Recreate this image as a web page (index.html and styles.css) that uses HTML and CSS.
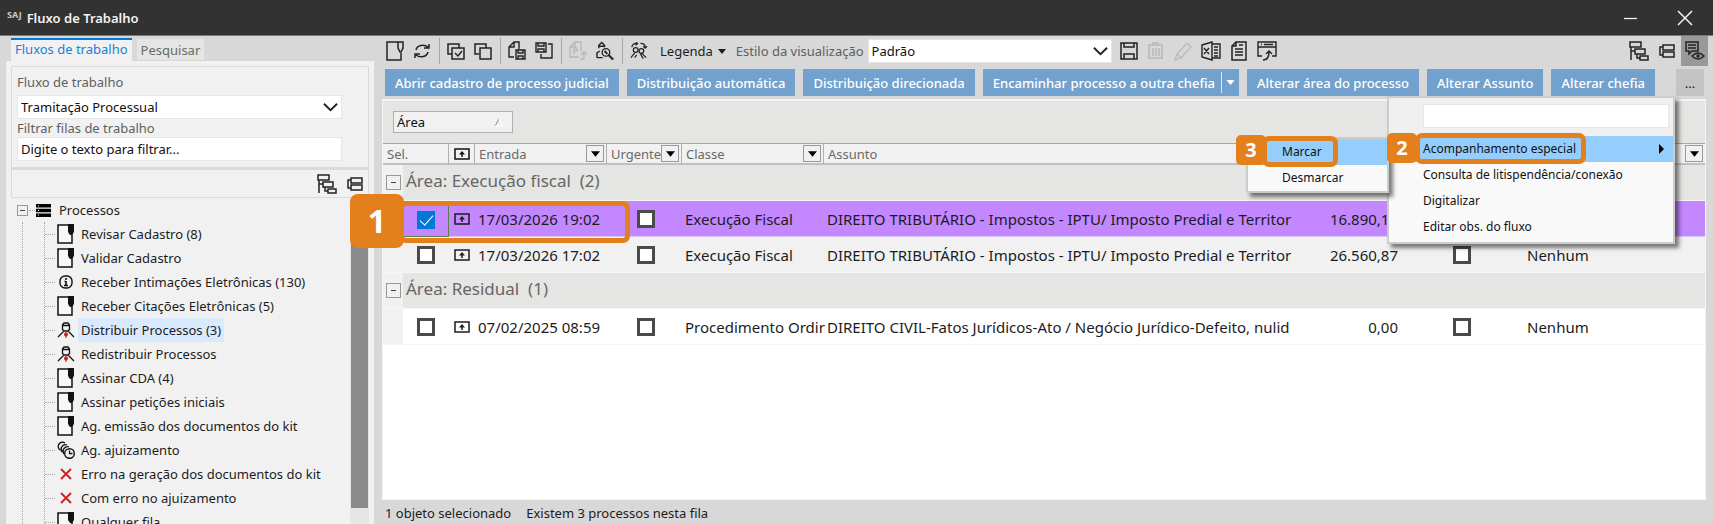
FILE: index.html
```html
<!DOCTYPE html>
<html lang="pt-BR">
<head>
<meta charset="utf-8">
<title>Fluxo de Trabalho</title>
<link rel="stylesheet" href="styles.css">
</head>
<body>
<svg class="defs" aria-hidden="true">
  <symbol id="i-note" viewBox="0 0 18 20"><path d="M1 1h14v18H1z" fill="#f8f8f8" stroke="currentColor" stroke-width="1.5"/><path d="M11 0h6v8l-2 3h-2l-2-3z" fill="currentColor"/></symbol>
  <symbol id="i-new" viewBox="0 0 18 20"><path d="M12 1H1v18h14v-7M12 1h5v6l-2 4h-1l-2-4z" fill="none" stroke="currentColor" stroke-width="1.5"/></symbol>
  <symbol id="i-refresh" viewBox="0 0 18 20"><path d="M3 9c1-5 8-6 12-3M16 3v4h-5M15 11c-1 5-8 6-12 3M2 17v-4h5" fill="none" stroke="currentColor" stroke-width="1.5"/></symbol>
  <symbol id="i-selall" viewBox="0 0 18 20"><path d="M5 13H1V3h11v4M5 7h12v11H5zM8 12l3 3 4-5" fill="none" stroke="currentColor" stroke-width="1.5"/></symbol>
  <symbol id="i-copy" viewBox="0 0 18 20"><path d="M5 13H1V3h11v4M6 7h11v11H6z" fill="none" stroke="currentColor" stroke-width="1.5"/></symbol>
  <symbol id="i-docsave" viewBox="0 0 18 20"><path d="M6 16H1V6l5-5h5v7M6 1v5H1M8 9h9v9H8zM10 9v3h5V9M10 18v-3h5v3" fill="none" stroke="currentColor" stroke-width="1.4"/></symbol>
  <symbol id="i-savedoc" viewBox="0 0 18 20"><path d="M1 2h10v9H1zM3 2v3h6V2M3 11V8h6v3M13 3h4v14H6v-4" fill="none" stroke="currentColor" stroke-width="1.4"/></symbol>
  <symbol id="i-pdoc" viewBox="0 0 18 20"><path d="M10 16H1V6l5-5h6v9M6 1v5H1M5 13V7h3v3H5M11 18h4v-6M12 14l3-3 3 3" fill="none" stroke="currentColor" stroke-width="1.3"/></symbol>
  <symbol id="i-search" viewBox="0 0 19 20"><path d="M1 17h6M1 17v-5l3-2M3 7V4l3-3 3 3v2M3 5h6M13 14l5 5" fill="none" stroke="currentColor" stroke-width="1.5"/><circle cx="10.500" cy="11.500" r="4" fill="none" stroke="currentColor" stroke-width="1.4"/><path d="M9 10l3 3M13 14l5 5" stroke="currentColor" stroke-width="2"/></symbol>
  <symbol id="i-swap" viewBox="0 0 19 20"><path d="M2 6c0-3 2-4 6-4M6 1l2 1-2 2M11 2c3 0 5 1 5 4M14 5l2 2 2-2M1 17l4-5M12 12l5 5M5 17l2-3M11 13l3 5" fill="none" stroke="currentColor" stroke-width="1.3"/><circle cx="6" cy="9" r="2.500" fill="none" stroke="currentColor" stroke-width="1.3"/><circle cx="12" cy="10" r="2.500" fill="none" stroke="currentColor" stroke-width="1.3"/></symbol>
  <symbol id="i-save" viewBox="0 0 18 20"><path d="M1 2h16v16H1zM4 2v4h10V2M4 18v-5h10v5" fill="none" stroke="currentColor" stroke-width="1.5"/></symbol>
  <symbol id="i-trash" viewBox="0 0 18 20"><path d="M1 4h15M6 4V2h5v2M2 4v13h13V4M6 7v8M9 7v8M12 7v8" fill="none" stroke="currentColor" stroke-width="1.5"/></symbol>
  <symbol id="i-pencil" viewBox="0 0 18 20"><path d="M1 19l2-6L13 2l4 4L7 17zM3 13l4 4" fill="none" stroke="currentColor" stroke-width="1.2"/></symbol>
  <symbol id="i-excel" viewBox="0 0 20 20"><path d="M1 4l10-3v18L1 16zM11 3h8v14h-8M3 7l5 6M8 7l-5 6M13 6h4M13 9h4M13 12h4M13 15h4" fill="none" stroke="currentColor" stroke-width="1.4"/></symbol>
  <symbol id="i-doc" viewBox="0 0 18 20"><path d="M6 1h10v18H2V5zM6 1v4H2M5 8h8M5 11h8M5 14h8M9 4h4" fill="none" stroke="currentColor" stroke-width="1.5"/></symbol>
  <symbol id="i-winexp" viewBox="0 0 20 20"><path d="M5 15H1V1h18v14h-4M1 6h18M4 3.500h1M7 3.500h9M6 19c4 0 6-2 6-8M9 13l3-3 3 3" fill="none" stroke="currentColor" stroke-width="1.4"/></symbol>
  <symbol id="i-tree" viewBox="0 0 20 20"><path d="M1 1h11v5H1zM6 8h10v5H6zM11 15h8v4h-8zM2 6v13M2 10h4M8 13v4h3" fill="none" stroke="currentColor" stroke-width="1.5"/></symbol>
  <symbol id="i-collapse" viewBox="0 0 16 14"><path d="M4 1h11v5H4zM4 8h11v5H4zM4 3H1v8h3" fill="none" stroke="currentColor" stroke-width="1.5"/></symbol>
  <symbol id="i-chat" viewBox="0 0 20 20"><path d="M1 1h12v9H7l-3 3v-3H1zM3 4h8M3 7h8" fill="none" stroke="currentColor" stroke-width="1.5"/><path d="M7 15q6-6 12 0q-6 6-12 0z" fill="#999" stroke="currentColor" stroke-width="1.5"/><circle cx="13" cy="15" r="1.7" fill="currentColor"/></symbol>
  <symbol id="i-stack" viewBox="0 0 15 13"><path d="M0 0h15v3.600H0zM0 4.700h15v3.600H0zM0 9.400h15V13H0z" fill="currentColor"/><path d="M2 2h1M2 6.500h1M2 11h1" stroke="#fff"/></symbol>
  <symbol id="i-info" viewBox="0 0 18 20"><rect x="3" y="4" width="12" height="12" rx="5" fill="none" stroke="currentColor" stroke-width="1.4"/><path d="M9 6v2M9 9v5M7 13.500h4M7.500 9.500H9" stroke="currentColor" stroke-width="1.600"/></symbol>
  <symbol id="i-person" viewBox="0 0 18 20"><path d="M5.500 9.500V5l1.500-2h4l1.500 2v4.500l-1.500 1.500H7zM5.500 5.500h7M7 11l-6 6M11 11l6 6" fill="none" stroke="currentColor" stroke-width="1.300"/><path d="M9 11.500v6.500" stroke="#d01c22"/><circle cx="9" cy="14.500" r="2" fill="#d01c22"/></symbol>
  <symbol id="i-clock" viewBox="0 0 18 20"><path d="M3 10a4 4 0 1 1 5-7M5 12a4.500 4.500 0 0 1 5-7M7 14a4.500 4.500 0 0 1 5-7" fill="none" stroke="currentColor" stroke-width="1.300"/><circle cx="12.500" cy="13.500" r="4.800" fill="#f1f1f1" stroke="currentColor" stroke-width="1.400"/><path d="M12.500 10.500v3h3" fill="none" stroke="currentColor" stroke-width="1.300"/></symbol>
  <symbol id="i-x" viewBox="0 0 18 20"><path d="M4 5l10 10M14 5L4 15" stroke="#d01c22" stroke-width="1.800"/></symbol>
  <symbol id="i-in" viewBox="0 0 16 12"><path d="M1 1h14v10H1z" fill="none" stroke="currentColor" stroke-width="1.500"/><path d="M8 9V5" stroke="currentColor" stroke-width="1.500"/><path d="M5 6.500L8 3l3 3.500z" fill="currentColor"/></symbol>
  <symbol id="i-chev" viewBox="0 0 16 10"><path d="M1 1.500l7 7 7-7" fill="none" stroke="currentColor" stroke-width="2"/></symbol>
  <symbol id="i-down" viewBox="0 0 10 6"><path d="M0 0h10L5 6z" fill="currentColor"/></symbol>
</svg>

<header class="titlebar">
  <span class="brand">SAJ</span>
  <h1 class="title">Fluxo de Trabalho</h1>
  <div class="winbtns">
    <button class="winbtn" aria-label="Minimizar"><svg width="16" height="16"><path d="M1 8.500h13" stroke="currentColor" stroke-width="1.300"/></svg></button>
    <button class="winbtn" aria-label="Fechar"><svg width="16" height="16"><path d="M1 1l14 14M15 1L1 15" stroke="currentColor" stroke-width="1.500"/></svg></button>
  </div>
</header>

<div class="window">
  <aside class="sidebar">
    <div class="tabs">
      <button class="tab tab-active">Fluxos de trabalho</button>
      <button class="tab">Pesquisar</button>
    </div>
    <div class="side-panel">
      <div class="filters">
        <label for="flow">Fluxo de trabalho</label>
        <div class="select">
          <select id="flow"><option>Tramitação Processual</option></select>
          <svg class="chev"><use href="#i-chev"/></svg>
        </div>
        <label for="queue">Filtrar filas de trabalho</label>
        <input id="queue" class="field" type="text" value="Digite o texto para filtrar...">
      </div>
      <div class="side-tools">
        <button class="tool" aria-label="Expandir"><svg width="20" height="20"><use href="#i-tree"/></svg></button>
        <button class="tool" aria-label="Recolher"><svg width="16" height="14"><use href="#i-collapse"/></svg></button>
      </div>
      <div class="tree-area">
        <div class="tree">
          <div class="tree-root"><button class="toggle" aria-label="Recolher Processos"></button><span class="stub"></span><svg width="15" height="13"><use href="#i-stack"/></svg><span>Processos</span></div>
          <div class="branch">
            <ul>
              <li><svg><use href="#i-note"/></svg><span>Revisar Cadastro (8)</span></li>
              <li><svg><use href="#i-note"/></svg><span>Validar Cadastro</span></li>
              <li><svg><use href="#i-info"/></svg><span>Receber Intimações Eletrônicas (130)</span></li>
              <li><svg><use href="#i-note"/></svg><span>Receber Citações Eletrônicas (5)</span></li>
              <li class="current"><svg><use href="#i-person"/></svg><span>Distribuir Processos (3)</span></li>
              <li><svg><use href="#i-person"/></svg><span>Redistribuir Processos</span></li>
              <li><svg><use href="#i-note"/></svg><span>Assinar CDA (4)</span></li>
              <li><svg><use href="#i-note"/></svg><span>Assinar petições iniciais</span></li>
              <li><svg><use href="#i-note"/></svg><span>Ag. emissão dos documentos do kit</span></li>
              <li><svg><use href="#i-clock"/></svg><span>Ag. ajuizamento</span></li>
              <li><svg><use href="#i-x"/></svg><span>Erro na geração dos documentos do kit</span></li>
              <li><svg><use href="#i-x"/></svg><span>Com erro no ajuizamento</span></li>
              <li><svg><use href="#i-note"/></svg><span>Qualquer fila</span></li>
            </ul>
          </div>
        </div>
        <div class="scroll"><div class="thumb"></div></div>
      </div>
    </div>
  </aside>

  <main class="main">
    <div class="toolbar">
      <div class="tools"><button class="tool" aria-label="Novo"><svg><use href="#i-new"/></svg></button><button class="tool" aria-label="Atualizar"><svg><use href="#i-refresh"/></svg></button></div>
      <div class="tools"><button class="tool" aria-label="Selecionar todos"><svg><use href="#i-selall"/></svg></button><button class="tool" aria-label="Limpar seleção"><svg><use href="#i-copy"/></svg></button></div>
      <div class="tools"><button class="tool" aria-label="Salvar documento"><svg><use href="#i-docsave"/></svg></button><button class="tool" aria-label="Carregar documento"><svg><use href="#i-savedoc"/></svg></button></div>
      <div class="tools"><button class="tool off" aria-label="Pasta"><svg><use href="#i-pdoc"/></svg></button><button class="tool" aria-label="Localizar"><svg><use href="#i-search"/></svg></button></div>
      <div class="tools last"><button class="tool" aria-label="Redistribuir"><svg><use href="#i-swap"/></svg></button></div>
      <button class="legend">Legenda <svg width="8" height="5"><use href="#i-down"/></svg></button>
      <label class="style-label" for="style">Estilo da visualização</label>
      <div class="select select-style">
        <select id="style"><option>Padrão</option></select>
        <svg class="chev"><use href="#i-chev"/></svg>
      </div>
      <div class="tools view">
        <button class="tool" aria-label="Salvar"><svg><use href="#i-save"/></svg></button>
        <button class="tool off" aria-label="Excluir"><svg><use href="#i-trash"/></svg></button>
        <button class="tool off" aria-label="Editar"><svg><use href="#i-pencil"/></svg></button>
        <button class="tool wide" aria-label="Exportar planilha"><svg><use href="#i-excel"/></svg></button>
        <button class="tool" aria-label="Relatório"><svg><use href="#i-doc"/></svg></button>
        <button class="tool wide" aria-label="Exportar janela"><svg><use href="#i-winexp"/></svg></button>
      </div>
      <div class="right-tools">
        <button class="tool" aria-label="Expandir grupos"><svg width="20" height="20"><use href="#i-tree"/></svg></button>
        <button class="tool" aria-label="Recolher grupos"><svg width="16" height="14"><use href="#i-collapse"/></svg></button>
        <button class="tool pressed" aria-label="Observações"><svg width="20" height="20"><use href="#i-chat"/></svg></button>
      </div>
    </div>

    <div class="actions">
      <button class="action">Abrir cadastro de processo judicial</button>
      <button class="action">Distribuição automática</button>
      <button class="action">Distribuição direcionada</button>
      <button class="action split">Encaminhar processo a outra chefia<span class="split-arrow"><svg width="9" height="5"><use href="#i-down"/></svg></span></button>
      <button class="action">Alterar área do processo</button>
      <button class="action">Alterar Assunto</button>
      <button class="action">Alterar chefia</button>
      <div class="more-wrap">
        <button class="more">...</button>
        <div class="menu">
          <div class="menu-search"><input type="text" class="field" aria-label="Pesquisar ação"></div>
          <div class="item hot">
            <button>Acompanhamento especial</button>
            <svg class="item-arrow" width="6" height="10"><path d="M0 0l5 5-5 5z"/></svg>
            <span class="frame frame-2"></span><span class="badge badge-2">2</span>
            <div class="submenu">
              <div class="item hot"><button>Marcar</button><span class="frame frame-3"></span><span class="badge badge-3">3</span></div>
              <div class="item"><button>Desmarcar</button></div>
            </div>
          </div>
          <div class="item"><button>Consulta de litispendência/conexão</button></div>
          <div class="item"><button>Digitalizar</button></div>
          <div class="item"><button>Editar obs. do fluxo</button></div>
        </div>
      </div>
    </div>

    <section class="grid">
      <div class="groupby"><button class="chip">Área <svg width="10" height="9"><path d="M1 8L5 1" stroke="#888"/><path d="M5 1l4 7H1" fill="none" stroke="#fff"/></svg></button></div>
      <table>
        <colgroup><col class="c-ind"><col class="c-sel"><col class="c-icon"><col class="c-date"><col class="c-urg"><col class="c-class"><col><col class="c-val"><col class="c-chk"><col class="c-last"></colgroup>
        <thead>
          <tr>
            <th colspan="2">Sel.</th>
            <th class="mid"><svg width="16" height="12"><use href="#i-in"/></svg></th>
            <th><div class="h"><span>Entrada</span><button class="drop" aria-label="Filtrar entrada"><svg width="9" height="6"><use href="#i-down"/></svg></button></div></th>
            <th><div class="h"><span>Urgente</span><button class="drop" aria-label="Filtrar urgente"><svg width="9" height="6"><use href="#i-down"/></svg></button></div></th>
            <th><div class="h"><span>Classe</span><button class="drop" aria-label="Filtrar classe"><svg width="9" height="6"><use href="#i-down"/></svg></button></div></th>
            <th>Assunto</th><th></th><th></th>
            <th><div class="h"><span></span><button class="drop" aria-label="Filtrar coluna"><svg width="9" height="6"><use href="#i-down"/></svg></button></div></th>
          </tr>
        </thead>
        <tbody>
          <tr class="group"><td class="ind"><button class="toggle" aria-label="Recolher grupo"></button></td><td colspan="9">Área: Execução fiscal&nbsp; (2)</td></tr>
          <tr class="picked">
            <td class="ind"></td>
            <td class="mid focus"><input type="checkbox" checked aria-label="Selecionar"><span class="frame frame-1"></span><span class="badge badge-1">1</span></td>
            <td class="mid"><svg width="16" height="12"><use href="#i-in"/></svg></td><td>17/03/2026 19:02</td>
            <td class="urg"><input type="checkbox" aria-label="Urgente"></td><td>Execução Fiscal</td><td>DIREITO TRIBUTÁRIO - Impostos - IPTU/ Imposto Predial e Territor</td>
            <td class="num">16.890,11</td><td class="mid"><input type="checkbox" aria-label="Marca"></td><td class="none">Nenhum</td>
          </tr>
          <tr class="alt">
            <td class="ind"></td>
            <td class="mid"><input type="checkbox" aria-label="Selecionar"></td>
            <td class="mid"><svg width="16" height="12"><use href="#i-in"/></svg></td><td>17/03/2026 17:02</td>
            <td class="urg"><input type="checkbox" aria-label="Urgente"></td><td>Execução Fiscal</td><td>DIREITO TRIBUTÁRIO - Impostos - IPTU/ Imposto Predial e Territor</td>
            <td class="num">26.560,87</td><td class="mid"><input type="checkbox" aria-label="Marca"></td><td class="none">Nenhum</td>
          </tr>
          <tr class="group"><td class="ind"><button class="toggle" aria-label="Recolher grupo"></button></td><td colspan="9">Área: Residual&nbsp; (1)</td></tr>
          <tr>
            <td class="ind"></td>
            <td class="mid"><input type="checkbox" aria-label="Selecionar"></td>
            <td class="mid"><svg width="16" height="12"><use href="#i-in"/></svg></td><td>07/02/2025 08:59</td>
            <td class="urg"><input type="checkbox" aria-label="Urgente"></td><td>Procedimento Ordir</td><td>DIREITO CIVIL-Fatos Jurídicos-Ato / Negócio Jurídico-Defeito, nulid</td>
            <td class="num">0,00</td><td class="mid"><input type="checkbox" aria-label="Marca"></td><td class="none">Nenhum</td>
          </tr>
        </tbody>
      </table>
    </section>
    <footer class="status"><span>1 objeto selecionado</span><span>Existem 3 processos nesta fila</span></footer>
  </main>
</div>
</body>
</html>
```
FILE: styles.css
```css
* { box-sizing: border-box; }
body {
  margin: 0;
  height: 100vh;
  display: flex;
  flex-direction: column;
  overflow: hidden;
  background: #d8d8d8;
  color: #1c1c1c;
  font: 13px/18px "Noto Sans", "Open Sans", sans-serif;
}
button, input, select { font: inherit; color: inherit; }
button { margin: 0; padding: 0; border: 0; background: none; white-space: nowrap; }
.defs { position: absolute; width: 0; height: 0; }

.titlebar {
  display: flex;
  align-items: center;
  gap: 5px;
  flex: none;
  height: 36px;
  padding: 0 20px 0 7px;
  background: #323232;
  border-bottom: 1px solid #7a7a7a;
  color: #f2f2f2;
}
.brand { font-size: 9px; font-weight: 700; line-height: 16px; align-self: flex-start; padding-top: 7px; color: #ccc; }
.title { margin: 0; font-size: 13px; font-weight: 600; }
.winbtns { display: flex; gap: 38px; margin-left: auto; }
.winbtn { display: flex; }

.window { display: flex; flex: 1; min-height: 0; }
.sidebar { display: flex; flex-direction: column; flex: none; width: 374px; padding: 2px 0 0 6px; }
.tabs { display: flex; align-items: flex-end; gap: 5px; height: 23px; padding-left: 5px; }
.tab { height: 21px; margin-bottom: 1px; padding: 0 4px; background: #e5e5e3; color: #6a6a6a; }
.tab-active { height: 23px; margin: 0; border-top: 2px solid #0078d7; background: #f1f1f1; color: #1a7fd6; line-height: 16px; padding-bottom: 3px; }
.side-panel { display: flex; flex-direction: column; flex: 1; min-height: 0; padding: 5px 5px 0; background: #f1f1f1; }
.filters { display: flex; flex-direction: column; padding: 5px 26px 6px 5px; border: 1px solid #dadada; color: #5f5f5f; }
.filters label { line-height: 20px; }
.select { position: relative; margin-top: 3px; }
.select select, .field {
  display: block;
  width: 100%;
  height: 24px;
  padding: 0 3px;
  appearance: none;
  background: #fff;
  border: 1px solid #e6e6e6;
  border-radius: 0;
  color: #111;
}
.select + label { line-height: 18px; }
.chev { position: absolute; right: 4px; top: 7px; width: 15px; height: 10px; color: #222; pointer-events: none; }
.side-tools { display: flex; align-items: center; justify-content: flex-end; gap: 10px; height: 30px; padding-right: 5px; border: 1px solid #dadada; border-top-width: 2px; }
.tool { display: flex; align-items: center; justify-content: center; color: #222; }
.off { color: #b8b8b8; }

.tree-area { display: flex; flex: 1; min-height: 0; }
.tree { flex: 1; overflow: hidden; }
.tree-root { display: flex; align-items: center; height: 24px; padding-left: 6px; }
.tree-root svg { margin-right: 8px; color: #000; }
.toggle { display: flex; align-items: center; justify-content: center; width: 11px; height: 11px; border: 1px solid #999; }
.toggle::before { content: ""; width: 5px; height: 1px; background: #444; }
.stub { width: 6px; margin: 0 1px; border-top: 1px dotted #aaa; }
.branch { margin-left: 11px; border-left: 1px dotted #aaa; }
.branch ul { margin: 0 0 0 21px; padding: 0; list-style: none; border-left: 1px dotted #aaa; }
.branch li { display: flex; align-items: center; height: 24px; }
.branch li::before { content: ""; width: 10px; border-top: 1px dotted #aaa; }
.branch li svg { width: 18px; height: 20px; margin: 0 3px 0 2px; color: #111; }
.branch li span { padding: 3px; white-space: nowrap; }
.current span { background: #d9eaff; }
.scroll { width: 19px; padding: 0 1px 16px; background: #e6e6e6; }
.thumb { height: 100%; background: #8a8a8a; }

.main { display: flex; flex-direction: column; flex: 1; min-width: 0; padding: 0 7px 0 8px; position: relative; }
.toolbar { display: flex; align-items: center; flex: none; height: 30px; }
.tools { display: flex; align-items: center; gap: 9px; height: 26px; padding: 0 8px 0 7px; border-right: 1px solid #a8a8a8; }
.tools:first-child { padding-left: 4px; }
.tools svg { width: 18px; height: 20px; }
.tools .wide svg { width: 20px; }
.tools.last, .tools.view { border: 0; }
.legend { display: flex; align-items: center; gap: 5px; margin: 0 10px 0 4px; }
.style-label { color: #5f5f5f; }
.select-style { width: 244px; margin: 0 0 0 4px; }
.view { padding-left: 8px; }
.right-tools { display: flex; align-items: center; gap: 10px; height: 30px; margin-left: auto; }
.pressed { width: 27px; height: 30px; margin: 0 -2px 0 -4px; background: #999; }

.actions { display: flex; gap: 8px; flex: none; padding: 3px 2px 3px 3px; }
.action { height: 27px; padding: 0 10px; background: #72a1cd; color: #fff; font-weight: 500; }
.split { display: flex; align-items: center; gap: 6px; padding-right: 4px; }
.split-arrow { display: flex; align-items: center; height: 21px; padding-left: 4px; border-left: 1px solid #dce9f5; }
.more-wrap { position: relative; margin-left: auto; z-index: 5; }
.more { width: 28px; height: 27px; background: #c4c4c4; }

.menu, .submenu { position: absolute; background: #f9f9f9; border: 2px solid #ccc; box-shadow: 4px 4px 4px rgba(0, 0, 0, .5); font-size: 12px; }
.menu { top: 27px; right: 29px; width: 288px; padding-bottom: 2px; }
.menu-search { padding: 6px 4px 8px 34px; background: #f0f0f0; }
.item { position: relative; display: flex; align-items: center; height: 26px; padding-left: 34px; color: #111; }
.hot { background: #95cdfc; }
.item-arrow { margin: 0 8px 0 auto; }
.submenu { top: 1px; right: 100%; width: 143px; }

.frame { position: absolute; border: 5px solid #e4801c; border-radius: 7px; pointer-events: none; z-index: 2; }
.badge { position: absolute; display: flex; align-items: center; justify-content: center; width: 30px; height: 30px; border-radius: 5px; background: #e4801c; color: #fff; font-size: 20px; font-weight: 700; z-index: 3; }
.frame-1 { left: -5px; top: -1px; width: 231px; height: 42px; }
.badge-1 { left: -54px; top: -8px; width: 54px; height: 54px; border-radius: 8px; font-size: 32px; }
.frame-2 { left: 26px; top: -3px; width: 171px; height: 31px; }
.badge-2 { left: -2px; top: -3px; }
.frame-3 { left: 14px; top: -3px; width: 76px; height: 31px; }
.badge-3 { left: -12px; top: -4px; }

.grid { flex: 1; min-height: 0; border: 1px solid #f4f4f4; border-top-width: 2px; background: #fff; }
.groupby { padding: 10px; background: #e5e5e3; }
.chip { display: flex; align-items: center; justify-content: space-between; width: 120px; height: 22px; padding: 0 8px 0 3px; border: 1px solid #b0b0b0; background: #f1f1f1; color: #111; }
table { width: 100%; table-layout: fixed; border-collapse: separate; border-spacing: 0; }
.c-ind { width: 20px; }
.c-sel { width: 46px; }
.c-icon { width: 26px; }
.c-date { width: 132px; }
.c-urg { width: 75px; }
.c-class { width: 142px; }
.c-val { width: 113px; }
.c-chk { width: 114px; }
.c-last { width: 186px; }
th { height: 22px; padding: 0 2px 0 4px; border-top: 1px solid #a8a8a8; border-bottom: 2px solid #c0c0c0; border-right: 1px solid #b0b0b0; background: #f1f1f1; color: #6a6a6a; font-weight: 400; text-align: left; line-height: 16px; }
th:nth-child(n+6) { border-right: 0; }
th.mid { color: #111; }
.h { display: flex; align-items: center; justify-content: space-between; }
.drop { display: flex; align-items: center; justify-content: center; width: 18px; height: 17px; border: 1px solid #999; color: #000; }
td { position: relative; height: 36px; padding: 0 0 0 3px; font-size: 15px; white-space: nowrap; border-bottom: 1px solid #f6f6f6; }
td svg, th svg { display: block; }
.mid { padding: 0; text-align: center; }
.mid svg { margin: 0 auto; }
.ind { background: #f1f1f1; }
.group td { padding: 0 0 4px 3px; background: #e5e5e3; color: #666; font-size: 17px; }
.group .ind { padding-bottom: 0; background: #f1f1f1; }
.group .toggle { width: 15px; height: 15px; }
.picked td { background: #c387ff; border-bottom-color: #dcc4f4; }
.picked .ind { background: #f1f1f1; }
.picked .focus { border: 1px solid #5f7f4a; }
.alt td { background: #f1f1f1; }
.urg { padding-left: 30px; }
.num { padding-right: 7px; text-align: right; }
.none { padding-left: 8px; }
td input { display: inline-flex; width: 18px; height: 18px; margin: 0; appearance: none; vertical-align: middle; border: 3px solid #4a4a4a; background: #fff; }
td input:checked { justify-content: center; border: 0; background: #0078d7; }
td input:checked::before { content: ""; width: 6px; height: 12px; margin-top: 1px; border: solid #fff; border-width: 0 1px 1px 0; transform: rotate(42deg); }

.status { display: flex; gap: 15px; flex: none; padding: 4px 3px 2px; }
```
